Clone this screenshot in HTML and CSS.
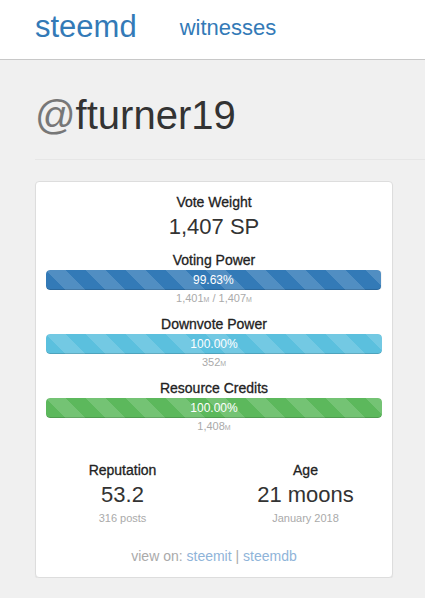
FILE: index.html
```html
<!DOCTYPE html>
<html>
<head>
    <title>steemd - @fturner19</title>
    <meta name="viewport" content="width=device-width, initial-scale=1.0">
    <link rel="stylesheet" href="styles.css">
</head>
<body>
<nav class="navbar">
    <a class="brand" href="#">steemd</a>
    <a class="nav-link" href="#">witnesses</a>
</nav>
<div class="container">
    <div class="page-header">
        <h1><span class="at">@</span>fturner19</h1>
    </div>
    <div class="card">
        <div class="label">Vote Weight</div>
        <div class="value">1,407 SP</div>

        <div class="meter">
            <div class="label">Voting Power</div>
            <div class="progress">
                <div class="bar bar-primary" style="width: 99.63%;">99.63%</div>
            </div>
            <div class="sub">1,401<small>M</small> / 1,407<small>M</small></div>
        </div>

        <div class="meter">
            <div class="label">Downvote Power</div>
            <div class="progress">
                <div class="bar bar-info" style="width: 100%;">100.00%</div>
            </div>
            <div class="sub">352<small>M</small></div>
        </div>

        <div class="meter">
            <div class="label">Resource Credits</div>
            <div class="progress">
                <div class="bar bar-success" style="width: 100%;">100.00%</div>
            </div>
            <div class="sub">1,408<small>M</small></div>
        </div>

        <div class="row">
            <div class="col">
                <div class="label">Reputation</div>
                <div class="value">53.2</div>
                <div class="sub">316 posts</div>
            </div>
            <div class="col">
                <div class="label">Age</div>
                <div class="value">21 moons</div>
                <div class="sub">January 2018</div>
            </div>
        </div>

        <div class="links">view on: <a href="#">steemit</a> | <a href="#">steemdb</a></div>
    </div>
</div>
</body>
</html>
```

FILE: styles.css
```css
body { margin: 0; background: #f0f0f0; font-family: "Liberation Sans", Arial, sans-serif; color: #333; }
a { color: #337ab7; text-decoration: none; }

.navbar { background: #fff; height: 59px; border-bottom: 1px solid #c8c8c8; display: flex; align-items: center; padding: 0 35px; gap: 43px; }
.navbar .brand { font-size: 31px; line-height: 40px; margin-top: -6px; }
.navbar .nav-link { font-size: 22px; line-height: 30px; margin-top: -4px; }

.container { padding: 0 0 0 35px; }
.page-header { margin-top: 33px; padding-bottom: 22px; border-bottom: 1px solid #e6e6e6; }
.page-header h1 { margin: 0; font-size: 40px; line-height: 44px; font-weight: normal; color: #333; }
.page-header .at { color: #777; }

.card { width: 336px; margin-top: 21px; background: #fff; border: 1px solid #ddd; border-radius: 4px; padding: 10px 10px 11px; text-align: center; box-shadow: 0 1px 1px rgba(0,0,0,.05); }
.label { font-size: 14px; line-height: 20px; color: #222; -webkit-text-stroke: 0.3px #222; }
.value { font-size: 22px; line-height: 30px; }
.sub { height: 16px; font-size: 11px; line-height: 16px; color: #aaa; }
.sub small { font-size: 7px; line-height: 1; }

.meter { margin-top: 8px; }
.progress { height: 20px; background: #f5f5f5; border-radius: 4px; overflow: hidden; }
.bar { height: 100%; color: #fff; font-size: 12px; line-height: 20px; border-radius: 4px;
    background-image: linear-gradient(45deg, rgba(255,255,255,.15) 25%, transparent 25%, transparent 50%, rgba(255,255,255,.15) 50%, rgba(255,255,255,.15) 75%, transparent 75%, transparent);
    background-size: 40px 40px; box-shadow: inset 0 -1px 0 rgba(0,0,0,.15); }
.bar-primary { background-color: #337ab7; }
.bar-info { background-color: #5bc0de; }
.bar-success { background-color: #5cb85c; }

.row { display: grid; grid-template-columns: 1fr 1fr; margin: 26px -15px 0; }

.links { margin-top: 20px; font-size: 14px; line-height: 20px; color: #aaa; }
.links a { color: #8fb4d9; }
```
